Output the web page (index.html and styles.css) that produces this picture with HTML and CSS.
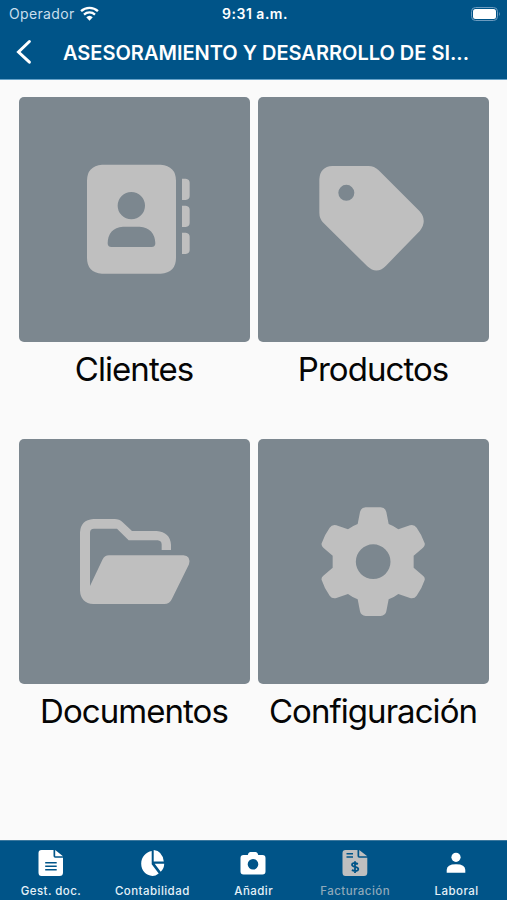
FILE: index.html
```html
<!DOCTYPE html>
<html lang="es">
<head>
<meta charset="utf-8">
<title>Facturación</title>
<link rel="stylesheet" href="styles.css">
</head>
<body>
<div class="app">
  <header class="header">
    <div class="status">
      <div class="carrier"><span>Operador</span>
        <svg class="wifi" viewBox="0 0 18 14"><path d="M1 4.800a11.600 11.600 0 0 1 16 0M3.800 8a7.600 7.600 0 0 1 10.400 0" fill="none" stroke="#fff" stroke-width="2.200"/><path d="M9 13.800 5.900 10.600a4.500 4.500 0 0 1 6.200 0z" fill="#fff"/></svg>
      </div>
      <div class="time">9:31 a.m.</div>
      <svg class="battery" viewBox="0 0 30 14"><rect x=".5" y=".5" width="26" height="13" rx="4" fill="none" stroke="#6c9bbf"/><rect x="2" y="2" width="23" height="10" rx="2.500" fill="#fff"/><path d="M28 4.800q1.800 2.200 0 4.400z" fill="#6c9bbf"/></svg>
    </div>
    <div class="navbar">
      <svg class="back" viewBox="0 0 16 26"><path d="M13.400 2.500 2.500 13l10.900 10.200" fill="none" stroke="#fff" stroke-width="3" stroke-linecap="round" stroke-linejoin="miter"/></svg>
      <h1 class="title">ASESORAMIENTO Y DESARROLLO DE SI...</h1>
    </div>
  </header>

  <main class="grid">
    <a class="card">
      <svg class="tile" viewBox="-153 -159 693 735">
        <path fill-rule="evenodd" d="M96 44H272Q318 48 318 92V324Q318 368 272 371H96Q51 368 51 324V92Q51 48 96 44zM184 126a41 41 0 1 0 0 82a41 41 0 1 0 0-82zM159 230Q114 234 113 280Q113 291 124 291H245Q256 291 256 280Q254 234 209 230z"/>
        <path d="M336 86H347Q359 87 359 98V138Q359 149 347 150H336zM336 167H347Q359 168 359 179V219Q359 230 347 231H336zM336 248H347Q359 249 359 260V300Q359 311 347 312H336z"/>
      </svg>
      <span class="label">Clientes</span>
    </a>
    <a class="card">
      <svg class="tile" viewBox="-126 -159 693 735">
        <path fill-rule="evenodd" d="M97 48H205Q223 48 236 61L359 184Q383 212 360 242L258 347Q230 375 202 349L70 218Q58 206 58 188V88Q60 50 97 48zM139 104.500a24 24 0 1 0 0 48a24 24 0 1 0 0-48z"/>
      </svg>
      <span class="label">Productos</span>
    </a>
    <a class="card">
      <svg class="tile" viewBox="-153 -183 693 735">
        <path d="M70 57H134Q148 57 158 67L186 93H260Q300 96 303 134V150H275V134Q275 122 263 121H176L141 86H72Q60 86 60 98V258L98 178Q104 166 117 166H340Q363 168 357 193L306 296Q299 312 283 312H70Q32 309 30 272V97Q32 60 70 57z"/>
      </svg>
      <span class="label">Documentos</span>
    </a>
    <a class="card">
      <svg class="tile" viewBox="-126 -168 693 735">
        <path fill-rule="evenodd" d="M197 37H242Q256 38 259 51L266 87Q282 93 295 103L330 91Q343 88 350 98Q366 120 374 145Q376 152 369 158L341 182V218L369 242Q376 248 374 255Q366 280 350 302Q343 312 330 309L295 297Q282 307 266 313L259 349Q256 362 242 363H197Q183 362 180 349L173 313Q157 307 144 297L109 309Q96 312 89 302Q73 280 65 255Q63 248 70 242L98 218V182L70 158Q63 152 65 145Q73 120 89 98Q96 88 109 91L144 103Q157 93 173 87L180 51Q183 38 197 37zM219.500 148a52 52 0 1 0 0 104a52 52 0 1 0 0-104z"/>
      </svg>
      <span class="label">Configuración</span>
    </a>
  </main>

  <nav class="tabs">
    <a class="tab">
      <svg viewBox="0 0 26 28"><path d="M3.500 1H15.500V7Q15.500 8.700 17.200 8.700H25V23.500Q25 27 21.500 27H3.500Q.5 27 .5 23.500V4Q.5 1 3.500 1zM17.200 1 25 7.200H17.200z"/><path d="M7.200 13.800H18.700M7.200 17.200H18.700M7.200 20.700H18.700" stroke="#005488" stroke-width="1.500"/></svg>
      <span>Gest. doc.</span>
    </a>
    <a class="tab">
      <svg viewBox="-1 0 26 28"><path d="M11.700 2V15.200L18.700 24.500Q15.500 27 12.500 27C6 26.500 1.200 21.500 1.200 14.800C1.200 8 6 3 11.700 2zM13.700 1Q22.500 2 23.800 12.500H13.700zM14.700 14.800H24.200Q24.200 19.800 20.700 22.700z"/></svg>
      <span>Contabilidad</span>
    </a>
    <a class="tab">
      <svg viewBox="0 0 26 28"><path fill-rule="evenodd" d="M8.300 4.500Q8.800 3 10.400 3H15.600Q17.200 3 17.700 4.500L18.200 6H22.500Q25.500 6 25.500 9V22.500Q25.500 25.500 22.500 25.500H3.500Q.5 25.500 .5 22.500V9Q.5 6 3.500 6H7.800zM13 10a5.300 5.300 0 1 0 0 10.600a5.300 5.300 0 1 0 0-10.600z"/></svg>
      <span>Añadir</span>
    </a>
    <a class="tab active">
      <svg viewBox="0 0 26 28"><path d="M3.500 1H15.500V7Q15.500 8.700 17.200 8.700H25.300V23.500Q25.300 27 22 27H3.500Q.5 27 .5 23.500V4Q.5 1 3.500 1zM17.200 1 25.300 7.200H17.200z"/><path d="M4.500 4.700H11M4.500 8H11" stroke="#005488" stroke-width="1.500"/><path d="M16 14.800Q10 12.800 10 15.800C10 18.700 16.300 17.100 16.300 20.100Q16 23.300 9.800 21.200M13 12.200V24" fill="none" stroke="#005488" stroke-width="1.800"/></svg>
      <span>Facturación</span>
    </a>
    <a class="tab">
      <svg viewBox="0 0 26 28"><circle cx="13" cy="8.300" r="4.600"/><path d="M3.700 23.800V21Q3.700 15.300 13 15.300T22.300 21V23.800z"/></svg>
      <span>Laboral</span>
    </a>
  </nav>
</div>
</body>
</html>
```
FILE: styles.css
```css
* { box-sizing: border-box; }
body {
  margin: 0;
  background: #fafafa;
  color: #050505;
  font-family: Inter, "Liberation Sans", sans-serif;
}
.app {
  display: flex;
  flex-direction: column;
  height: 900px;
  width: 507px;
}
.header {
  height: 80px;
  background: #005488;
  border-bottom: 1px solid #65a2c9;
  color: #fff;
}
.status {
  display: grid;
  grid-template-columns: 1fr auto 1fr;
  align-items: center;
  height: 27px;
  padding: 0 6px 0 9px;
  font-size: 14px;
}
.carrier {
  display: flex;
  align-items: center;
  gap: 5px;
  color: #c9dfed;
  letter-spacing: 0.35px;
}
.wifi { width: 19px; height: 15px; }
.time { font-weight: 600; letter-spacing: 0.5px; }
.battery { width: 30px; height: 14px; justify-self: end; }
.navbar {
  display: flex;
  align-items: center;
  height: 50px;
  padding-left: 16px;
}
.back { width: 16px; height: 26px; }
.title {
  margin: 1px 0 0 31px;
  font-size: 20px;
  font-weight: 600;
  letter-spacing: 0;
  white-space: nowrap;
}
.grid {
  flex: 1;
  display: grid;
  grid-template-columns: 231px 231px;
  grid-template-rows: 342px 342px;
  column-gap: 8px;
  padding: 17px 0 0 19px;
}
.card { display: flex; flex-direction: column; align-items: center; }
.tile {
  width: 231px;
  height: 245px;
  flex: none;
  border-radius: 5px;
  background: #7c878f;
  fill: #bfbfbf;
}
.label {
  margin-top: 7px;
  padding-right: 1px;
  font-size: 33px;
  line-height: 40px;
  letter-spacing: -0.95px;
  white-space: nowrap;
}
.tabs {
  display: grid;
  grid-template-columns: repeat(5, 1fr);
  height: 60px;
  background: #005488;
  border-top: 1px solid #3c789e;
}
.tab {
  display: flex;
  flex-direction: column;
  align-items: center;
  padding-top: 8px;
  color: #e5f1f8;
  fill: #fff;
  font-size: 11.5px;
  font-weight: 550;
  line-height: 14px;
  letter-spacing: 0.45px;
  white-space: nowrap;
}
.tab svg { width: 26px; height: 28px; margin-bottom: 7px; }
.tab span { padding-left: 0.5px; }
.tab.active { color: #8fa9ba; fill: #bfbfbf; }
```
